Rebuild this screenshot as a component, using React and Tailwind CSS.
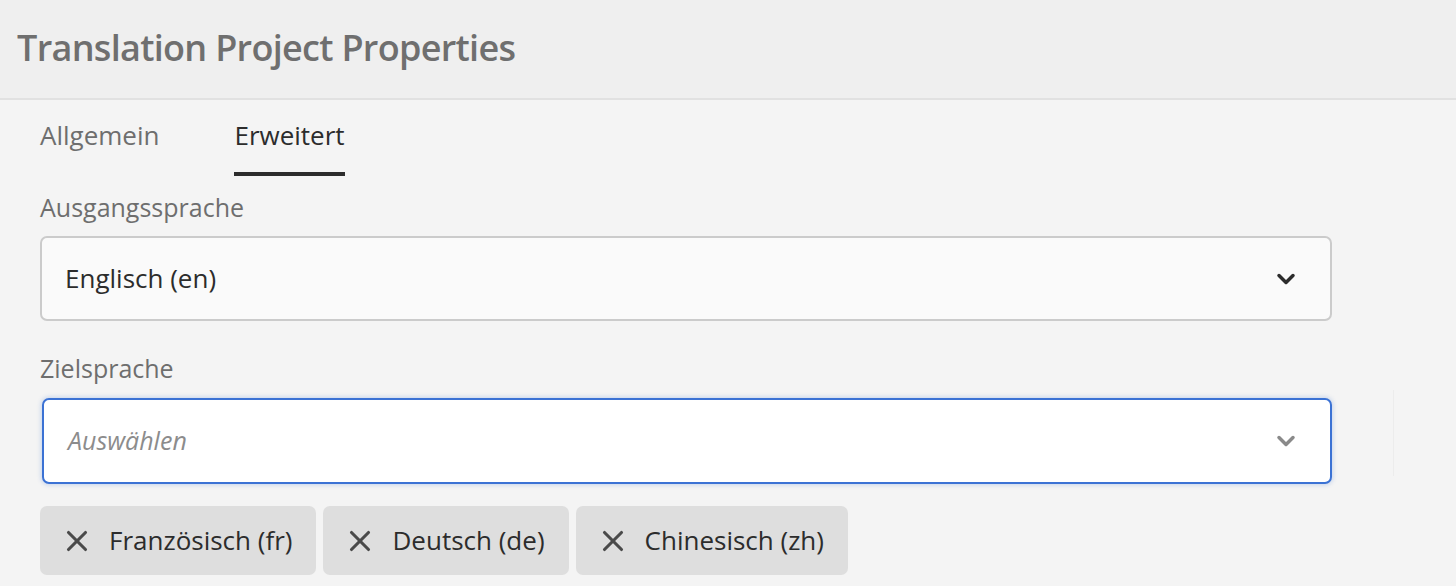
import { X, ChevronDown } from "lucide-react";

const tags = ["Französisch (fr)", "Deutsch (de)", "Chinesisch (zh)"];

export default function App() {
  return (
    <div className="w-[1456px] h-[586px] overflow-hidden bg-[#f4f4f4] font-['Open_Sans',sans-serif]">
      {/* Header */}
      <div className="h-[100px] bg-[#efefef] border-b-2 border-[#e1e1e1] flex items-center pl-[17px] pb-[2px]">
        <h1 className="text-[36px] font-semibold text-[#6f6f6f] tracking-[-0.7px]">Translation Project Properties</h1>
      </div>

      <div className="pl-[40px] pr-[124px] relative">
        {/* Tabs */}
        <div className="flex gap-[75px] h-[76px]">
          <div className="text-[26px] leading-[36px] text-[#6e6e6e] pt-[17px]">Allgemein</div>
          <div className="text-[26px] leading-[36px] text-[#2c2c2c] pt-[17px] border-b-[4px] border-[#2c2c2c]">Erweitert</div>
        </div>

        {/* Source language */}
        <label className="block text-[25px] text-[#6e6e6e] mt-[16px] leading-[30px]">Ausgangssprache</label>
        <div className="mt-[14px] h-[85px] rounded-[7px] border-2 border-[#cbcbcb] bg-[#fafafa] flex items-center justify-between pl-[23px] pr-[30px]">
          <span className="text-[26px] text-[#2c2c2c]">Englisch (en)</span>
          <ChevronDown size={28} strokeWidth={3} className="text-[#2c2c2c]" />
        </div>

        {/* Target language */}
        <label className="block text-[25px] text-[#6e6e6e] mt-[32px] leading-[30px]">Zielsprache</label>
        <div className="mt-[15px] ml-[2px] h-[86px] rounded-[7px] border-2 border-[#3b72d4] bg-white shadow-[0_0_4px_1px_rgba(59,114,212,0.25)] flex items-center justify-between pl-[24px] pr-[30px]">
          <span className="text-[25px] italic text-[#8c8c8c]">Auswählen</span>
          <ChevronDown size={28} strokeWidth={3} className="text-[#8a8a8a]" />
        </div>
        <div className="absolute right-[62px] top-[290px] w-px h-[86px] bg-[#ececec]" />

        {/* Tags */}
        <div className="flex gap-[7px] mt-[22px]">
          {tags.map((t) => (
            <div key={t} className="h-[69px] rounded-[7px] bg-[#dedede] flex items-center pl-[20px] pr-[24px] gap-[15px]">
              <X size={34} strokeWidth={2.2} className="text-[#4a4a4a]" />
              <span className="text-[26px] text-[#2c2c2c]">{t}</span>
            </div>
          ))}
        </div>
      </div>
    </div>
  );
}
